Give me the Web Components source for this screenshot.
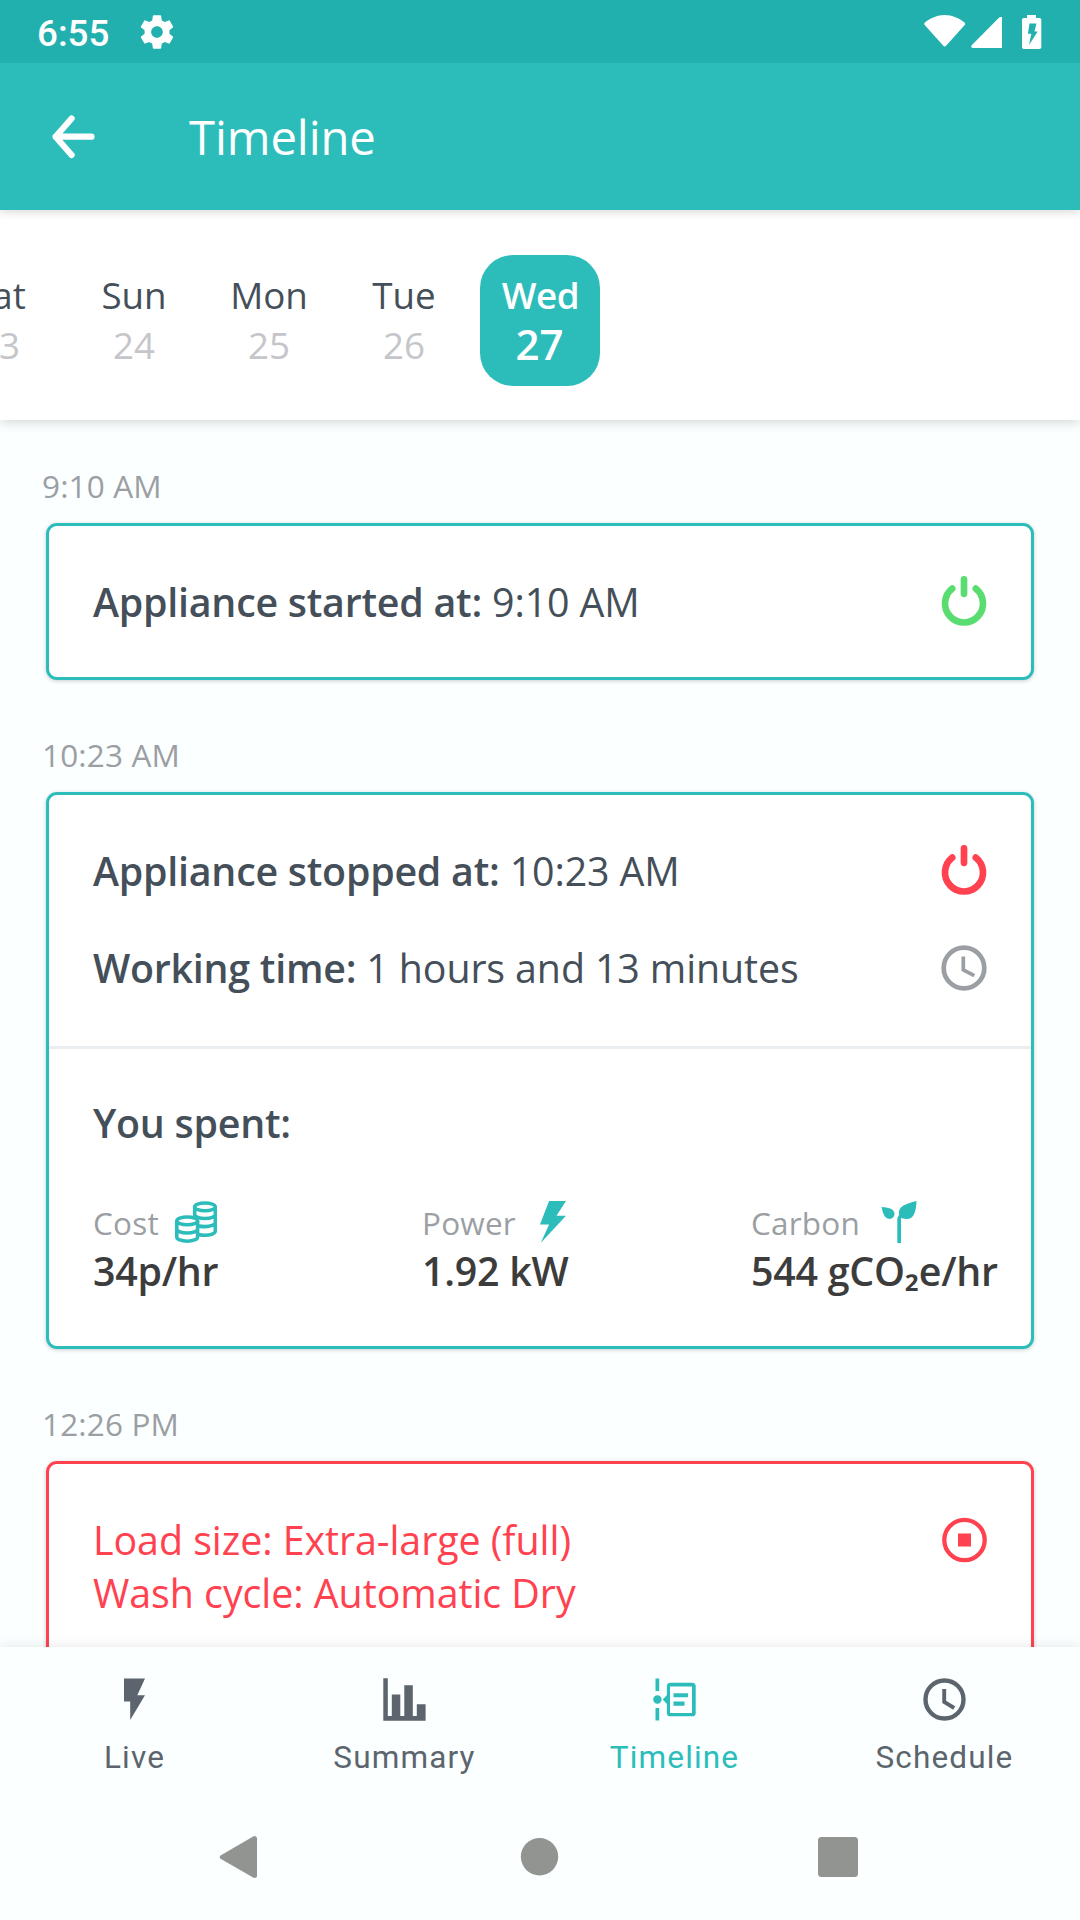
<!DOCTYPE html>
<html lang="en">
<head>
<meta charset="utf-8">
<title>Timeline</title>
<style>
html,body{margin:0;height:1920px;width:1080px;overflow:hidden;background:#fbffff}
body{font-family:"Open Sans","Noto Sans",sans-serif;color:#444f59;
--teal:#2cbdbb;--red:#ff4150;--green:#5add70;--grey:#9b9fa3}
</style>
</head>
<body>
<timeline-app></timeline-app>
<script>
const ICONS = {
  gear:['0 0 24 24',40,40,'<path fill="currentColor" d="M19.43 12.98c.04-.32.07-.64.07-.98s-.03-.66-.07-.98l2.11-1.65c.19-.15.24-.42.12-.64l-2-3.46c-.12-.22-.39-.3-.61-.22l-2.49 1c-.52-.4-1.08-.73-1.69-.98l-.38-2.65C14.46 2.18 14.25 2 14 2h-4c-.25 0-.46.18-.49.42l-.38 2.65c-.61.25-1.17.59-1.69.98l-2.49-1c-.23-.09-.49 0-.61.22l-2 3.46c-.13.22-.07.49.12.64l2.11 1.65c-.04.32-.07.65-.07.98s.03.66.07.98l-2.11 1.65c-.19.15-.24.42-.12.64l2 3.46c.12.22.39.3.61.22l2.49-1c.52.4 1.08.73 1.69.98l.38 2.65c.03.24.24.42.49.42h4c.25 0 .46-.18.49-.42l.38-2.65c.61-.25 1.17-.59 1.69-.98l2.49 1c.23.09.49 0 .61-.22l2-3.46c.12-.22.07-.49-.12-.64l-2.11-1.65zM12 15.500c-1.93 0-3.500-1.570-3.500-3.500s1.570-3.500 3.500-3.500 3.500 1.570 3.500 3.500-1.570 3.500-3.500 3.500z"/>'],
  signals:['0 0 118 36',118,36,'<path fill="currentColor" d="M.9 8.600C6 4.200 13.500 1 20.700 1s14.700 3.200 19.800 7.600q1.200 1.100.2 2.500L22.300 31.600q-1.600 1.700-3.200 0L.7 11.100q-1-1.400.2-2.500zM76.300 3h1.700v31H48.500q-2.200-.9-.8-2.700L75.200 3.500z"/><path fill="currentColor" fill-rule="evenodd" d="M103 1h9v3h3.500q1.800 0 1.800 1.800v27.400q0 1.800-1.800 1.800h-15.700q-1.800 0-1.800-1.800V5.800q0-1.800 1.800-1.800h3.200zM105.500 9.500l-1.600 10.300h3.400L105 31l8.700-13.400h-3.200l2-8.100z"/>'],
  back:['0 0 44 44',44,44,'<path d="M40.500 21.700H4.600M20.600 3.500 4.600 21.700 20.600 40" fill="none" stroke="currentColor" stroke-width="6.200" stroke-linecap="round" stroke-linejoin="round"/>'],
  power:['0 0 50 50',50,50,'<path d="M13.200 12.600a19 19 0 1 0 23.600 0M25 3.400V17.800" fill="none" stroke="currentColor" stroke-width="6.700" stroke-linecap="round"/>'],
  clock:['0 0 46 46',46,46,'<circle cx="23" cy="23" r="20.300" fill="none" stroke="currentColor" stroke-width="4.700"/><path d="M22.300 11.500v13.300l11 5.800" fill="none" stroke="currentColor" stroke-width="3.700"/>'],
  stop:['-.5 0 46 46',46,46,'<circle cx="23" cy="23" r="20.200" fill="none" stroke="currentColor" stroke-width="4.300"/><path fill="currentColor" d="M16.500 16.500h13v13h-13z"/>'],
  coins:['0 0 42 42',42,42,'<g fill="none" stroke="currentColor" stroke-width="3.600"><ellipse cx="30" cy="5.900" rx="10.300" ry="3.900"/><path d="M19.700 5.900V15M40.300 5.900V30.200c0 2.300-4.600 4.100-10.300 4.100-2.500 0-4.800-.3-6.500-.8M19.700 13.400c0 2.300 4.600 4.100 10.300 4.100s10.300-1.800 10.300-4.100M23.800 25.100c1.800.3 4 .5 6.200.5 5.700 0 10.300-1.800 10.300-4.100"/><ellipse cx="12.200" cy="19.900" rx="10.400" ry="3.900"/><path d="M1.800 19.900v16c0 2.400 4.600 4.300 10.400 4.300s10.400-1.900 10.400-4.300v-16M1.800 27.900c0 2.300 4.600 4.100 10.400 4.100s10.400-1.800 10.400-4.100"/></g>'],
  bolt:['0 0 42 42',42,42,'<path fill="currentColor" d="M17 0h17L24.500 14.700H34L8.700 42l8.400-18.500H8z"/>'],
  sprout:['-2 0 42 42',42,42,'<path fill="currentColor" d="M3.500 6q13 .7 13 7a5 5 0 0 1-5 5Q5.500 18 3.500 6zM38.500 0Q38 18 29 18q-3 0-6-1v25h-3.700V18q.2-2.200 1.700-4-1-6 4-9.300Q30 2 38.500 0z"/>'],
  live:['0 0 43 43',43,43,'<path fill="currentColor" d="M11 .5h21L24.300 17.300H32L17.200 42V23.400H11z"/>'],
  summary:['0 0 43 43',43,43,'<path fill="currentColor" d="M.3.300h4.500V38h4V16.500h8.500V38h4V7.300h8.500V38h4V26.200h8.800v16.500H.3z"/>'],
  timeline:['0 0 43 43',43,43,'<path fill="currentColor" d="M2.500.500h3.700v12.500H2.500zM2.500 30h3.700v12.600H2.500z"/><circle cx="4.400" cy="21.500" r="4.200" fill="currentColor"/><path fill="currentColor" fill-rule="evenodd" d="M17.800 4.700h21.500q3.400 0 3.400 3.500v26.700q0 3.400-3.400 3.400H17.300q-3.400 0-3.400-3.400v-9L9.800 21.500l4.100-4.400v-9q0-3.400 3.900-3.400zM17 8.500V35h22V8.500z"/><path fill="currentColor" d="M20.500 15.300h14.600v3.900H20.500zM20.500 23.500H31.500v4.200H20.500z"/>'],
  schedule:['0 0 43 43',43,43,'<circle cx="21.500" cy="21.500" r="19" fill="none" stroke="currentColor" stroke-width="4.400"/><path d="M21.200 11v13l10 6" fill="none" stroke="currentColor" stroke-width="3.900"/>'],
  navBack:['0 0 42 42',42,42,'<path fill="#929492" d="M35 0q3 0 3 2.500v37.300Q38 42 35 42L1.500 22.800q-1.500-1.600 0-3.200z"/>'],
  navHome:['0 0 42 42',42,42,'<circle cx="21.500" cy="20.700" r="18.700" fill="#929492"/>'],
  navRecent:['0 0 42 42',42,42,'<rect x="1" y="1" width="40" height="40" rx="3.500" fill="#929492"/>']
};

function define(name, css, html) {
  const template = document.createElement('template');
  template.innerHTML = `<style>${css}</style>${html}`;
  customElements.define(name, class extends HTMLElement {
    constructor() {
      super();
      this.attachShadow({mode: 'open'}).append(template.content.cloneNode(true));
    }
  });
}

customElements.define('ui-icon', class extends HTMLElement {
  connectedCallback() {
    if (this.shadowRoot) return;
    const [box, w, h, body] = ICONS[this.getAttribute('name')];
    this.attachShadow({mode: 'open'}).innerHTML =
      `<style>:host{display:block;flex:none}svg{display:block}</style><svg viewBox="${box}" width="${w}" height="${h}">${body}</svg>`;
  }
});

define('status-bar', `
  :host{display:flex;align-items:center;height:63px;box-sizing:border-box;flex:none;padding:0 38px 0 37px;background:#22b0af;color:#fff;font:500 36.75px/60px Roboto,sans-serif}
  .time{width:100px;padding-top:4px}ui-icon[name=signals]{margin-left:auto}
`, `<span class="time">6:55</span><ui-icon name="gear"></ui-icon><ui-icon name="signals"></ui-icon>`);

define('app-bar', `
  :host{display:flex;align-items:center;height:147px;box-sizing:border-box;flex:none;padding:0 51px;gap:94px;background:var(--teal);color:#fff;font-size:47.25px;line-height:64px;letter-spacing:-.1px;box-shadow:0 1px 10px rgba(0,0,0,.18);clip-path:inset(0 0 -20px 0);position:relative;z-index:2}
  .t{padding-top:1px}
`, `<ui-icon name="back"></ui-icon><span class="t"><slot></slot></span>`);

define('day-strip', `
  :host{display:flex;justify-content:flex-start;align-items:center;height:210px;flex:none;box-sizing:border-box;padding-top:10px;background:#fff;box-shadow:0 2px 11px rgba(0,0,0,.17);position:relative;z-index:1}
  div{display:flex;margin-left:-67.500px}
`, `<div><slot></slot></div>`);

define('day-cell', `
  :host{display:flex;justify-content:center;width:135px}
  div{display:flex;flex-direction:column;align-items:center;width:120px;height:131px;border-radius:33px;box-sizing:border-box;padding:15px 2px 0 0;font-size:36.75px;line-height:50px}
  .n{color:#c5c6ca}
  :host([selected]) div{background:var(--teal);color:#fff;font-weight:600;padding:15px 0 0 1px;letter-spacing:-.4px}
  :host([selected]) .n{color:#fff;font-size:42px;line-height:48px;padding-right:2px;letter-spacing:0}
`, `<div><span><slot></slot></span><span class="n"><slot name="number"></slot></span></div>`);

define('timeline-entry', `
  :host{display:flex;flex-direction:column;gap:16px;flex:none}
  .time{padding-left:42px;font-size:31.5px;line-height:43px;letter-spacing:.15px;color:var(--grey)}
  .card{margin:0 46px;border:3px solid var(--accent,var(--teal));border-radius:11px;background:#fff;box-shadow:0 1px 4px rgba(0,0,0,.2)}
  :host([alert]) .card{--accent:var(--red);color:var(--red)}
`, `<span class="time"><slot name="time"></slot></span><div class="card"><slot></slot></div>`);

define('entry-section', `
  :host{display:flex;flex-direction:column;gap:43px;padding:48.500px 44px}
  :host([divided]){border-bottom:3px solid #ebeef1;padding-bottom:51.500px}
  :host([stats]){gap:51px;padding-top:47px;padding-bottom:47px}
  :host([tall]){height:200px}
`, `<slot></slot>`);

define('entry-row', `
  :host{display:flex;align-items:center;justify-content:space-between;font-size:39.375px;line-height:54px;height:54px;letter-spacing:-.12px}
  :host([multi]){height:auto;align-items:flex-start;line-height:53.500px;letter-spacing:-.05px}
  :host([multi]) .text{padding-top:1px}
  ::slotted(b){font-weight:600;letter-spacing:-.24px}
  .i{display:flex;justify-content:center;width:50px;margin-right:-2px;align-items:center;height:54px}
  ::slotted(ui-icon[name=power]){margin-top:-2px}
`, `<span class="text"><slot></slot></span><span class="i"><slot name="icon"></slot></span>`);

define('stat-row', `:host{display:grid;grid-template-columns:329px 329px auto;margin-right:-40px}`, `<slot></slot>`);

define('stat-item', `
  :host{display:flex;flex-direction:column;white-space:nowrap}
  .l{display:flex;align-items:center;gap:16.500px;font-size:31.5px;line-height:43px;height:43px;letter-spacing:.2px;color:var(--grey)}
  .v{font-size:39.375px;font-weight:600;line-height:55px;letter-spacing:-.25px;color:#3c3c3c}
  ::slotted(ui-icon){color:var(--teal);margin-top:-2px}
`, `<span class="l"><span><slot name="label"></slot></span><slot name="icon"></slot></span><span class="v"><slot></slot></span>`);

define('tab-bar', `
  :host{display:grid;grid-template-columns:repeat(4,1fr);height:147px;flex:none;background:#fbffff;box-shadow:0 0 12px rgba(0,0,0,.11);position:relative}
`, `<slot></slot>`);

define('tab-item', `
  :host{display:flex;flex-direction:column;align-items:center;gap:15px;padding:31px 1px 0 0;box-sizing:border-box;color:#5c656d;font:31.5px/43px Roboto,sans-serif;letter-spacing:1.150px}
  :host([active]){color:var(--teal)}
`, `<slot name="icon"></slot><span><slot></slot></span>`);

define('system-nav', `
  :host{display:flex;height:126px;flex:none;background:#fbffff;box-sizing:border-box;padding:42px 221px 0 219px;justify-content:space-between;position:relative}
`, `<ui-icon name="navBack"></ui-icon><ui-icon name="navHome"></ui-icon><ui-icon name="navRecent"></ui-icon>`);

define('timeline-app', `
  :host{display:flex;flex-direction:column;width:1080px;height:1920px;overflow:hidden;background:#fbffff}
  main{flex:1;min-height:0;overflow:hidden;display:flex;flex-direction:column;gap:53px;padding-top:44px}
`, `
<status-bar></status-bar>
<app-bar>Timeline</app-bar>
<day-strip>
  <day-cell>Sat<span slot="number">23</span></day-cell>
  <day-cell>Sun<span slot="number">24</span></day-cell>
  <day-cell>Mon<span slot="number">25</span></day-cell>
  <day-cell>Tue<span slot="number">26</span></day-cell>
  <day-cell selected>Wed<span slot="number">27</span></day-cell>
</day-strip>
<main>
  <timeline-entry><span slot="time">9:10 AM</span>
    <entry-section><entry-row><b>Appliance started at:</b> 9:10 AM<ui-icon slot="icon" name="power" style="color:var(--green)"></ui-icon></entry-row></entry-section>
  </timeline-entry>
  <timeline-entry><span slot="time">10:23 AM</span>
    <entry-section divided>
      <entry-row><b>Appliance stopped at:</b> 10:23 AM<ui-icon slot="icon" name="power" style="color:var(--red)"></ui-icon></entry-row>
      <entry-row><b>Working time:</b> 1 hours and 13 minutes<ui-icon slot="icon" name="clock" style="color:var(--grey)"></ui-icon></entry-row>
    </entry-section>
    <entry-section stats>
      <entry-row><b>You spent:</b></entry-row>
      <stat-row>
        <stat-item><span slot="label">Cost</span><ui-icon slot="icon" name="coins"></ui-icon>34p/hr</stat-item>
        <stat-item><span slot="label">Power</span><ui-icon slot="icon" name="bolt"></ui-icon>1.92 kW</stat-item>
        <stat-item><span slot="label">Carbon</span><ui-icon slot="icon" name="sprout"></ui-icon>544 gCO₂e/hr</stat-item>
      </stat-row>
    </entry-section>
  </timeline-entry>
  <timeline-entry alert><span slot="time">12:26 PM</span>
    <entry-section tall><entry-row multi>Load size: Extra-large (full)<br>Wash cycle: Automatic Dry<ui-icon slot="icon" name="stop"></ui-icon></entry-row></entry-section>
  </timeline-entry>
</main>
<tab-bar>
  <tab-item><ui-icon slot="icon" name="live"></ui-icon>Live</tab-item>
  <tab-item><ui-icon slot="icon" name="summary"></ui-icon>Summary</tab-item>
  <tab-item active><ui-icon slot="icon" name="timeline"></ui-icon>Timeline</tab-item>
  <tab-item><ui-icon slot="icon" name="schedule"></ui-icon>Schedule</tab-item>
</tab-bar>
<system-nav></system-nav>
`);
</script>
</body>
</html>
